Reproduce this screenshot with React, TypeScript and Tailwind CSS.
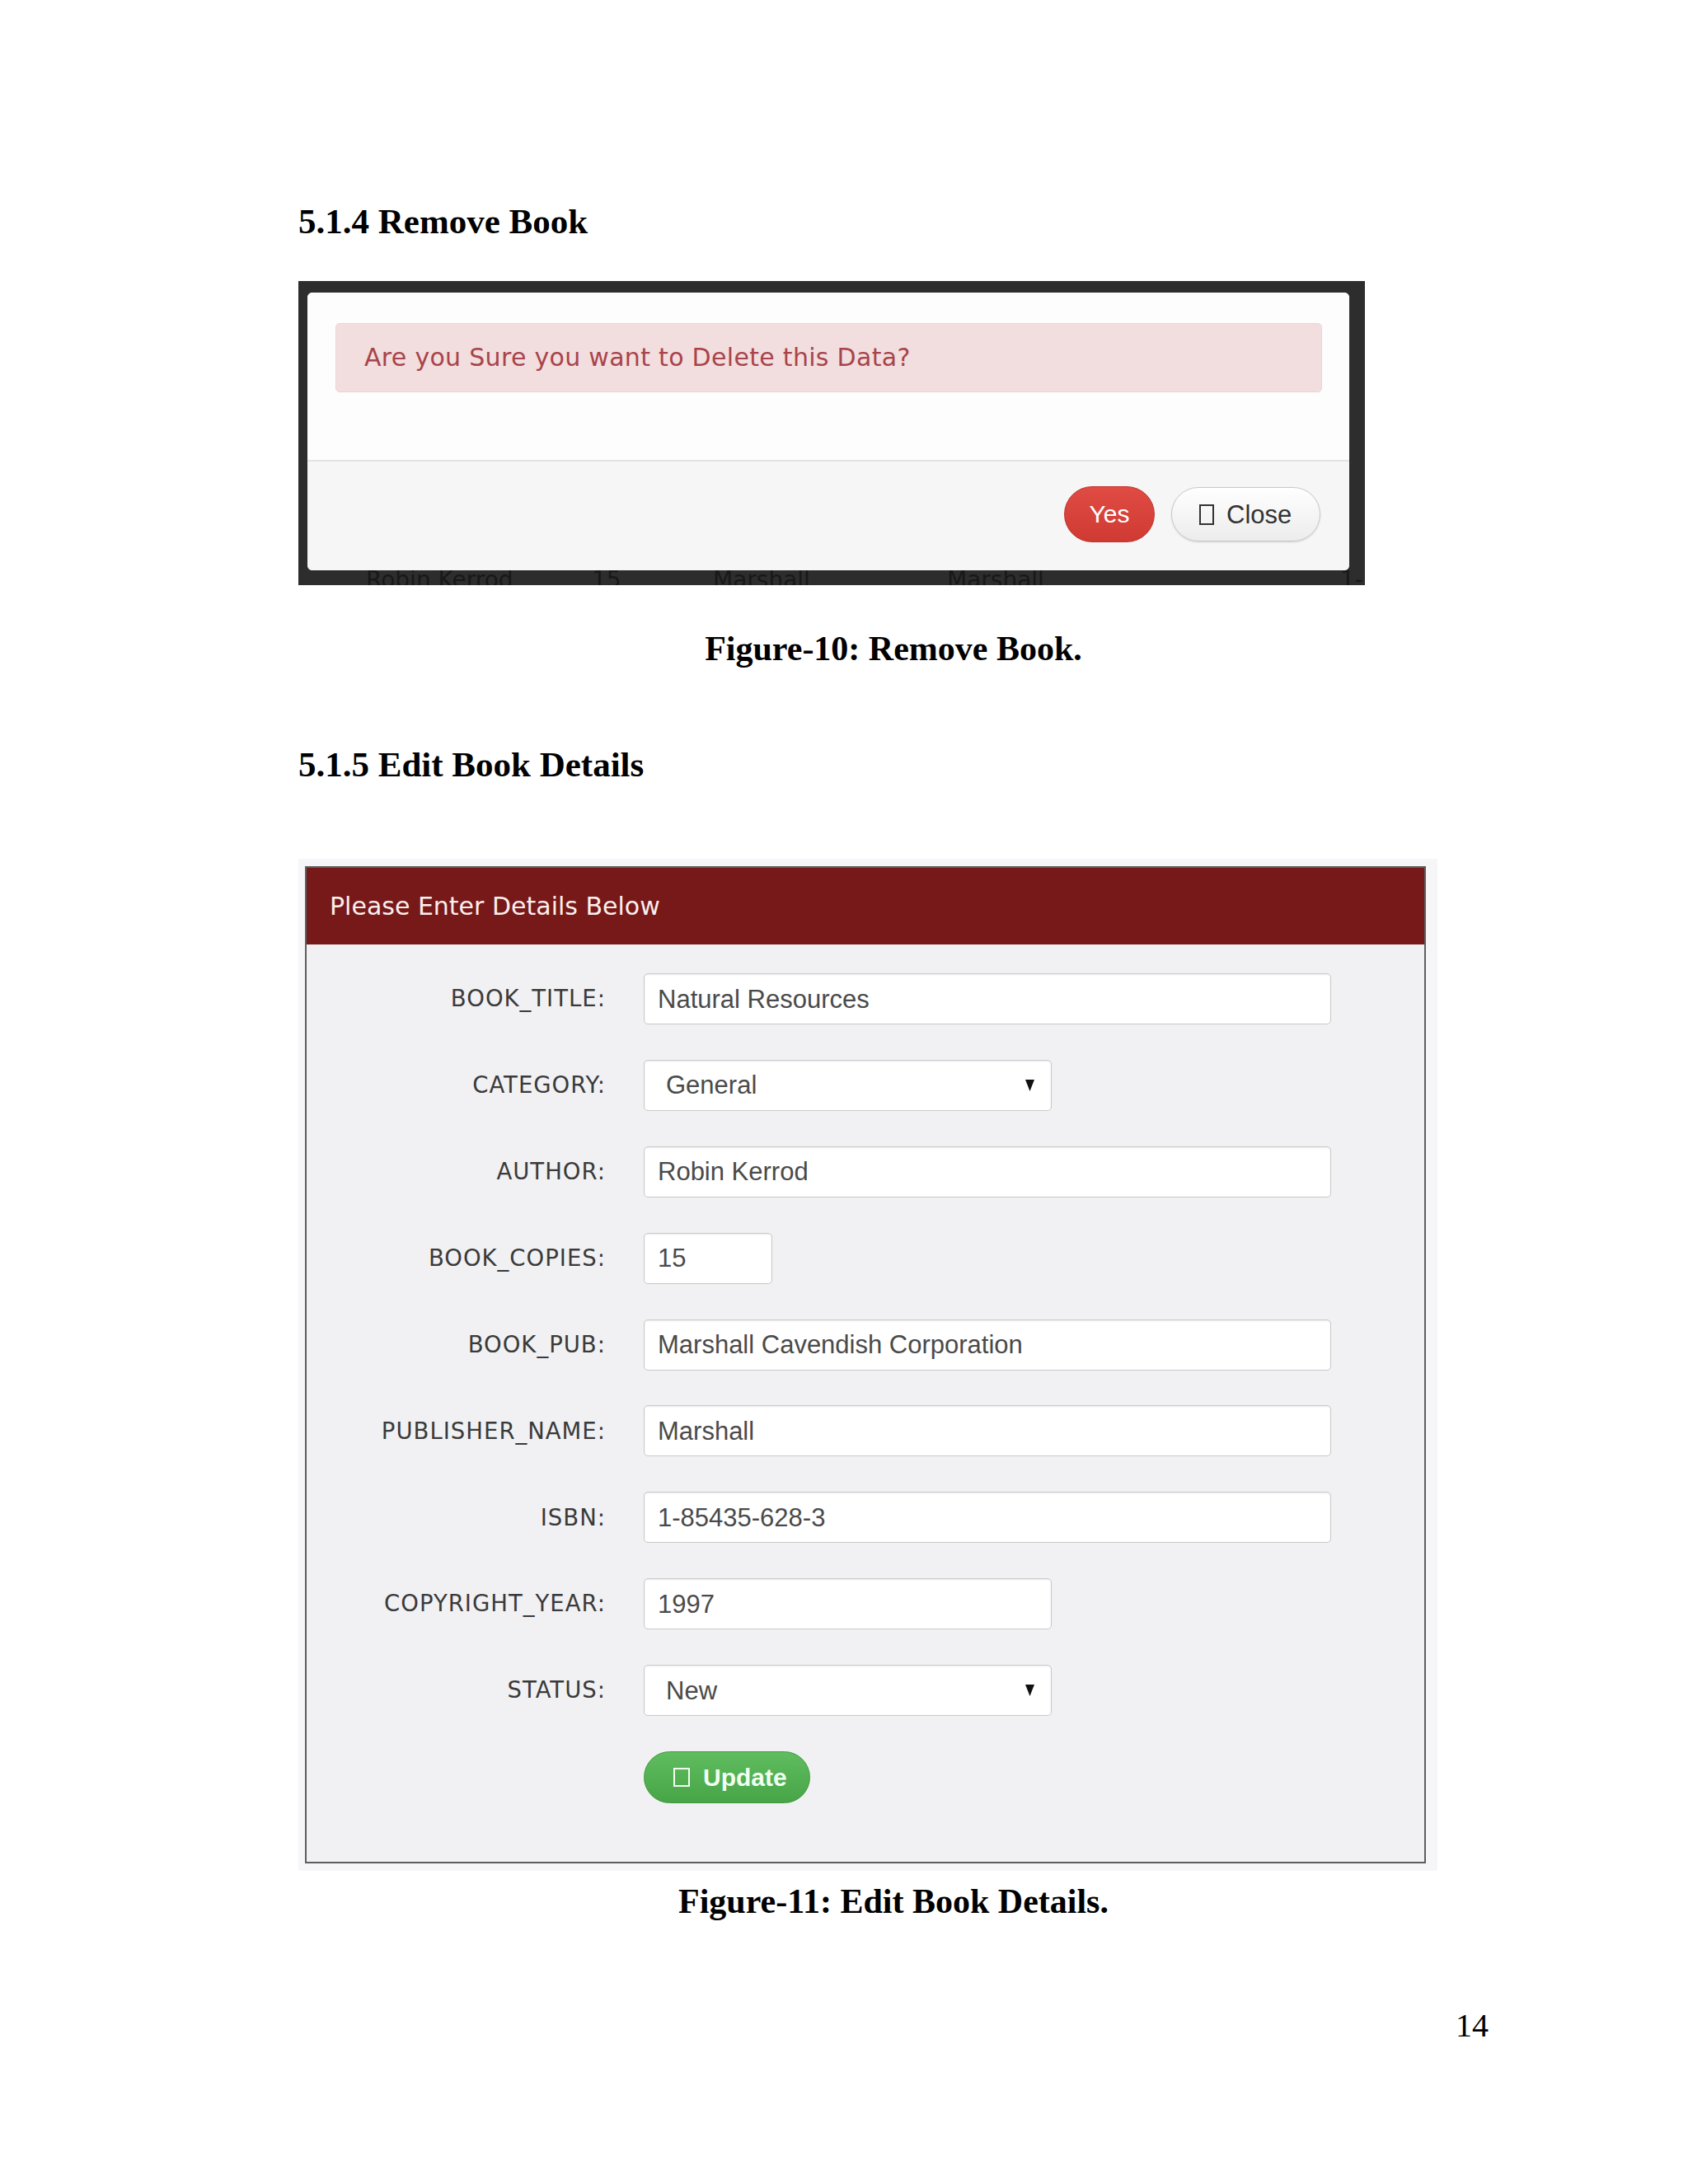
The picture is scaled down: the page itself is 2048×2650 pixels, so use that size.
import React from "react";

const serif = { fontFamily: '"Liberation Serif", "Times New Roman", serif' };
const gothic = { fontFamily: '"DejaVu Sans", "Liberation Sans", sans-serif' };
const arial = { fontFamily: '"Liberation Sans", Arial, sans-serif' };

function Field({ w, value, select }: { w: string; value: string; select?: boolean }) {
  return (
    <div
      className={`${w} h-[62px] bg-white border border-[#c9c9c9] rounded-[5px] shadow-[inset_0_1px_2px_rgba(0,0,0,0.08)] flex items-center justify-between ${select ? "pl-[26px] pr-[20px]" : "pl-[16px]"} text-[31px] text-[#4a4a4a]`}
      style={arial}
    >
      <span className="leading-none">{value}</span>
      {select && (
        <svg width="11" height="14" viewBox="0 0 11 14">
          <path d="M0 0 H11 L5.5 14 Z" fill="#111" />
        </svg>
      )}
    </div>
  );
}

function Label({ text }: { text: string }) {
  return (
    <div className="h-[62px] flex items-center justify-end text-[27.5px] tracking-[1px] text-[#3a3a3a] leading-none" style={gothic}>
      {text}
    </div>
  );
}

const rows: { label: string; value: string; w: string; select?: boolean }[] = [
  { label: "BOOK_TITLE:", value: "Natural Resources", w: "w-[834px]" },
  { label: "CATEGORY:", value: "General", w: "w-[495px]", select: true },
  { label: "AUTHOR:", value: "Robin Kerrod", w: "w-[834px]" },
  { label: "BOOK_COPIES:", value: "15", w: "w-[156px]" },
  { label: "BOOK_PUB:", value: "Marshall Cavendish Corporation", w: "w-[834px]" },
  { label: "PUBLISHER_NAME:", value: "Marshall", w: "w-[834px]" },
  { label: "ISBN:", value: "1-85435-628-3", w: "w-[834px]" },
  { label: "COPYRIGHT_YEAR:", value: "1997", w: "w-[495px]" },
  { label: "STATUS:", value: "New", w: "w-[495px]", select: true },
];

export default function App() {
  return (
    <div className="w-[2048px] min-h-[2650px] bg-white pl-[362px] pr-[242px] pt-[247px] flex flex-col text-black">
      <h2 className="text-[43px] leading-none font-bold" style={serif}>
        5.1.4 Remove Book
      </h2>

      {/* Remove dialog screenshot */}
      <div className="mt-[51px] relative overflow-hidden bg-[#2d2d2d] w-[1294px] h-[369px] pt-[14px] pl-[11px]">
        <div className="absolute top-[349px] left-0 w-full h-[40px] text-[28px] leading-none text-[#181818]" style={gothic}>
          <span className="absolute left-[82px]">Robin Kerrod</span>
          <span className="absolute left-[356px]">15</span>
          <span className="absolute left-[503px]">Marshall</span>
          <span className="absolute left-[787px]">Marshall</span>
          <span className="absolute left-[1264px]">1-8</span>
        </div>
        <div className="relative z-10 w-[1264px] h-[337px] bg-white rounded-[6px] flex flex-col overflow-hidden">
          <div className="h-[203px] pt-[37px] pl-[34px] pr-[33px] bg-[#fdfdfd]">
            <div
              className="h-[84px] rounded-[5px] bg-[#f2dedf] border border-[#eed3d6] flex items-center pl-[34px] text-[30px] tracking-[0.3px] text-[#a9444a] leading-none"
              style={gothic}
            >
              Are you Sure you want to Delete this Data?
            </div>
          </div>
          <div className="flex-1 border-t-2 border-[#e3e3e3] bg-[#f6f6f7] flex items-center justify-end pr-[35px] gap-[20px] pb-[4px]">
            <button
              className="w-[110px] h-[68px] rounded-full bg-gradient-to-b from-[#e04b44] to-[#cf3a33] border border-[#c3332d] text-white text-[30px] leading-none flex items-center justify-center"
              style={arial}
            >
              Yes
            </button>
            <button
              className="w-[181px] h-[66px] rounded-full border border-[#c8c8c8] bg-gradient-to-b from-white to-[#ececec] shadow-[0_1px_2px_rgba(0,0,0,0.15)] flex items-center pl-[33px] gap-[15px] text-[31px] text-[#333] leading-none"
              style={arial}
            >
              <span className="w-[18px] h-[25px] border-2 border-[#333]" />
              Close
            </button>
          </div>
        </div>
      </div>

      <p className="mt-[56px] text-center text-[42px] leading-none font-bold" style={serif}>
        Figure-10: Remove Book.
      </p>

      <h2 className="mt-[98px] text-[43px] leading-none font-bold" style={serif}>
        5.1.5 Edit Book Details
      </h2>

      {/* Edit form screenshot */}
      <div className="mt-[93px] w-[1382px] bg-[#f6f6f8] pt-[9px] pl-[8px] pr-[14px] pb-[9px]">
        <div className="w-[1360px] border-2 border-[#5e5e5e] bg-[#f1f1f3]">
          <div className="h-[93px] bg-[#771918] flex items-center pl-[28px] text-[30px] text-[#fbeeee] leading-none" style={gothic}>
            Please Enter Details Below
          </div>
          <div className="pt-[35px] pb-[71px] grid grid-cols-[363px_1fr] gap-x-[46px] gap-y-[42.9px]">
            {rows.map((r) => (
              <React.Fragment key={r.label}>
                <Label text={r.label} />
                <Field w={r.w} value={r.value} select={r.select} />
              </React.Fragment>
            ))}
            <div />
            <div>
              <button
                className="h-[63px] w-[202px] rounded-full bg-gradient-to-b from-[#5fbd5f] to-[#47a447] border border-[#409a40] flex items-center pl-[35px] gap-[16px] text-[30px] font-bold text-[#f0fff0] leading-none"
                style={arial}
              >
                <span className="w-[20px] h-[23px] border-2 border-[#f0fff0]" />
                Update
              </button>
            </div>
          </div>
        </div>
      </div>

      <p className="mt-[16px] text-center text-[42px] leading-none font-bold" style={serif}>
        Figure-11: Edit Book Details.
      </p>

      <p className="mt-[110px] text-right text-[40px] leading-none" style={serif}>
        14
      </p>
    </div>
  );
}
